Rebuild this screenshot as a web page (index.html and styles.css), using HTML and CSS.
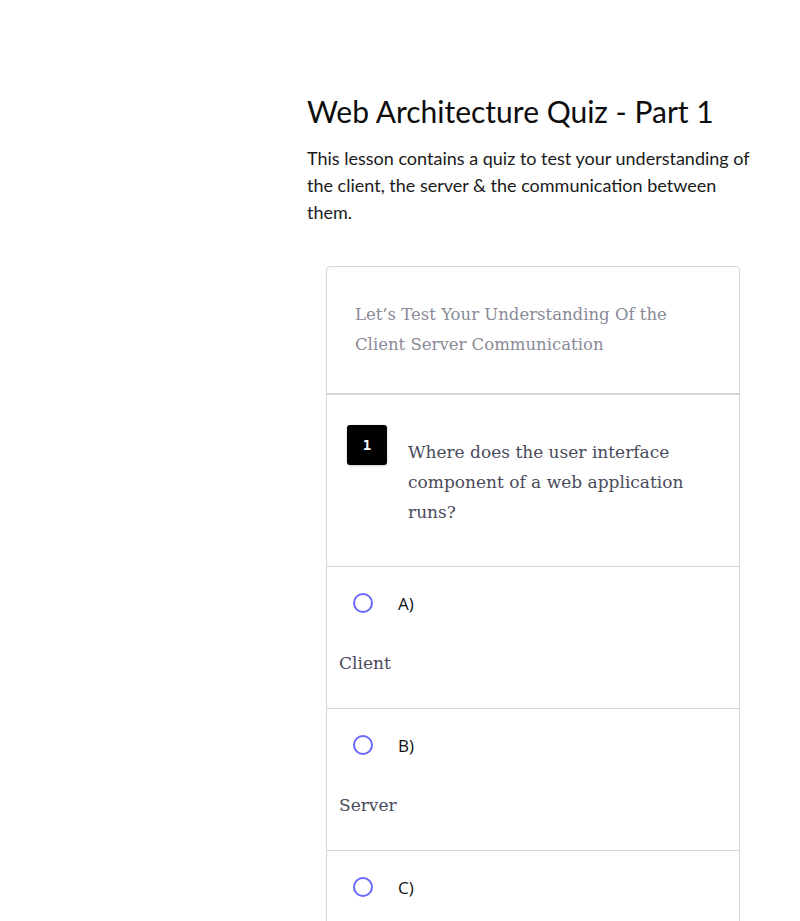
FILE: index.html
```html
<!DOCTYPE html>
<html>
<head>
<meta charset="utf-8">
<title>Web Architecture Quiz - Part 1</title>
<link rel="stylesheet" href="styles.css">
</head>
<body>
<main class="lesson">
  <h1 class="title">Web Architecture Quiz - Part 1</h1>
  <p class="intro">This lesson contains a quiz to test your understanding of the client, the server &amp; the communication between them.</p>
  <section class="quiz">
    <div class="quiz-head">Let’s Test Your Understanding Of the Client Server Communication</div>
    <div class="question">
      <div class="badge">1</div>
      <div class="q-text">Where does the user interface component of a web application runs?</div>
    </div>
    <div class="option">
      <div class="opt-row"><span class="radio"></span><span class="opt-key">A)</span></div>
      <div class="opt-text">Client</div>
    </div>
    <div class="option">
      <div class="opt-row"><span class="radio"></span><span class="opt-key">B)</span></div>
      <div class="opt-text">Server</div>
    </div>
    <div class="option">
      <div class="opt-row"><span class="radio"></span><span class="opt-key">C)</span></div>
      <div class="opt-text">Both</div>
    </div>
  </section>
</main>
</body>
</html>
```

FILE: styles.css
```css
html, body {
  margin: 0;
  padding: 0;
  background: #ffffff;
}
body {
  font-family: "Lato", "Noto Sans", sans-serif;
  color: #111111;
}
.lesson {
  margin-left: 307px;
  width: 462px;
  padding-top: 92px;
}
.title {
  margin: 0;
  font-size: 30px;
  font-weight: 400;
  line-height: 38px;
  color: #0d0d0d;
}
.intro {
  margin: 15px 0 0;
  width: 454px;
  font-size: 18px;
  line-height: 27px;
  color: #1a1a1a;
}
.quiz {
  margin: 40px 0 0 19px;
  width: 412px;
  border: 1px solid #d6d6da;
  border-radius: 4px;
  font-family: "DejaVu Serif", serif;
}
.quiz-head {
  padding: 33px 28px 33px;
  font-size: 16.5px;
  line-height: 30px;
  color: #8a8a98;
  border-bottom: 2px solid #d4d4d8;
}
.question {
  display: flex;
  align-items: flex-start;
  gap: 21px;
  padding: 30px 20px 39px;
  border-bottom: 1px solid #d6d6da;
}
.badge {
  flex: none;
  width: 40px;
  height: 40px;
  border-radius: 3px;
  background: #000000;
  color: #ffffff;
  font-family: "DejaVu Sans Mono", monospace;
  font-weight: 700;
  font-size: 14px;
  display: flex;
  align-items: center;
  justify-content: center;
  box-shadow: 0 1px 3px rgba(0,0,0,0.2);
}
.q-text {
  margin-top: 12px;
  font-size: 17px;
  line-height: 30px;
  color: #4a4a5c;
}
.option {
  padding: 24px 12px 30px;
  border-bottom: 1px solid #d6d6da;
}
.opt-row {
  display: flex;
  align-items: center;
  height: 24px;
  padding-left: 14px;
}
.radio {
  width: 16px;
  height: 16px;
  border: 2px solid #6868ff;
  border-radius: 50%;
  box-sizing: content-box;
}
.opt-key {
  margin-left: 25px;
  font-family: "Open Sans", sans-serif;
  font-size: 17px;
  color: #111111;
}
.opt-text {
  margin-top: 33px;
  font-size: 17px;
  line-height: 30px;
  color: #4a4a5c;
}
```
